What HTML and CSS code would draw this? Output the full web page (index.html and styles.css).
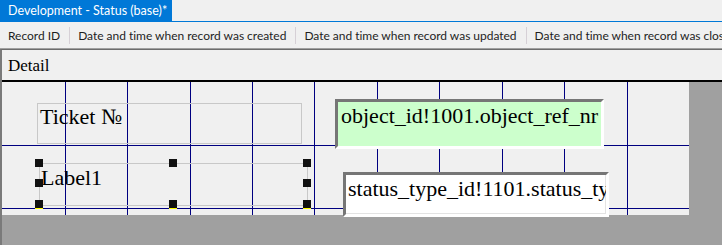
FILE: index.html
```html
<!DOCTYPE html>
<html lang="en">
<head>
    <meta charset="UTF-8">
    <title>Development - Status (base)*</title>
    <link rel="stylesheet" href="styles.css">
</head>
<body>
    <div class="tabbar">
        <div class="tab">Development - Status (base)*</div>
    </div>
    <div class="toolbar">
        <span class="col">Record ID</span>
        <span class="col">Date and time when record was created</span>
        <span class="col">Date and time when record was updated</span>
        <span class="col">Date and time when record was closed</span>
    </div>
    <div class="designer">
        <div class="band">Detail</div>
        <div class="surface">
            <div class="canvas">
                <!-- report controls -->
                <div class="label ticket">Ticket №</div>
                <div class="field green">object_id!1001.object_ref_nr</div>
                <div class="label label1">Label1</div>
                <div class="field status">status_type_id!1101.status_type_name</div>

                <!-- selection handles for Label1 -->
                <span class="handle h-tl"></span>
                <span class="handle h-tm"></span>
                <span class="handle h-tr"></span>
                <span class="handle h-ml"></span>
                <span class="handle h-mr"></span>
                <span class="handle h-bl"></span>
                <span class="handle h-bm"></span>
                <span class="handle h-br"></span>
            </div>
        </div>
    </div>
</body>
</html>
```

FILE: styles.css
```css
body {
    margin: 0;
    padding: 0;
    width: 722px;
    height: 245px;
    overflow: hidden;
    background-color: #f0f0f0;
    font-family: Lato, "Noto Sans", Arial, sans-serif;
    color: #1e1e1e;
}
.tabbar {
    height: 21px;
    display: flex;
    border-bottom: 1px solid #0078d7;
}
.tab {
    background: #0078d7;
    color: white;
    font-size: 12.5px;
    line-height: 21px;
    padding: 0 5px 0 8px;
    white-space: nowrap;
}
.toolbar {
    height: 26px;
    display: flex;
    align-items: center;
    white-space: nowrap;
    overflow: hidden;
    border-bottom: 1px solid #a0a0a0;
    font-size: 12px;
    letter-spacing: -0.02px;
}
.col {
    padding: 0 9px 0 8px;
    line-height: 17px;
}
.col + .col {
    border-left: 1px solid #d6d0d6;
}
.designer {
    border-top: 1px solid #6d6d6d;
    border-left: 2px solid #7a7a7a;
}
.band {
    height: 30px;
    line-height: 32px;
    padding-left: 6px;
    font-family: "Liberation Serif", "Times New Roman", serif;
    font-size: 17px;
    color: #000;
    border-bottom: 2px solid #000;
}
.surface {
    height: 163px;
    background: #a0a0a0;
}
.canvas {
    position: relative;
    width: 687px;
    height: 133px;
    background-color: #f0f0f0;
    background-image:
        linear-gradient(#000080, #000080), linear-gradient(#000080, #000080),
        linear-gradient(#000080, #000080), linear-gradient(#000080, #000080),
        linear-gradient(#000080, #000080), linear-gradient(#000080, #000080),
        linear-gradient(#000080, #000080), linear-gradient(#000080, #000080),
        linear-gradient(#000080, #000080), linear-gradient(#000080, #000080),
        linear-gradient(#000080, #000080), linear-gradient(#000080, #000080);
    background-repeat: no-repeat;
    background-size:
        1px 100%, 1px 100%, 1px 100%, 1px 100%, 1px 100%,
        1px 100%, 1px 100%, 1px 100%, 1px 100%, 1px 100%,
        100% 1px, 100% 1px;
    background-position:
        63px 0, 125px 0, 188px 0, 250px 0, 312px 0,
        375px 0, 437px 0, 500px 0, 562px 0, 625px 0,
        0 63px, 0 126px;
    font-family: "Liberation Serif", "Times New Roman", serif;
    font-size: 22px;
    line-height: 22px;
    color: #000;
}
.label, .field, .handle {
    position: absolute;
    box-sizing: border-box;
    white-space: nowrap;
    overflow: hidden;
}
.label {
    border: 1px solid #c8c8c8;
}
.ticket {
    left: 35px;
    top: 21px;
    width: 265px;
    height: 41px;
    padding: 2px 0 0 2px;
}
.label1 {
    left: 37px;
    top: 81px;
    width: 269px;
    height: 43px;
    padding: 3px 0 0 1px;
}
.field {
    border-style: solid;
    border-width: 3px;
    border-color: #767676 #fff #fff #767676;
}
.green {
    left: 333px;
    top: 17px;
    width: 269px;
    height: 50px;
    padding: 3px 0 0 3px;
    background: #ccffcc;
}
.status {
    left: 341px;
    top: 90px;
    width: 266px;
    height: 45px;
    padding: 3px 0 0 2px;
    background: #fff;
    box-shadow: inset -1px -1px 0 #e3e3e3;
}
.handle {
    width: 8px;
    height: 8px;
    background: #111;
}
.h-tl, .h-tm, .h-tr { top: 77px; }
.h-ml, .h-mr { top: 97px; }
.h-bl, .h-bm, .h-br {
    top: 118px;
    box-shadow: 0 1px 0 #ffff00;
    overflow: visible;
}
.h-tl, .h-ml, .h-bl { left: 33px; }
.h-tm, .h-bm { left: 167px; }
.h-tr, .h-mr, .h-br { left: 301px; }
```
